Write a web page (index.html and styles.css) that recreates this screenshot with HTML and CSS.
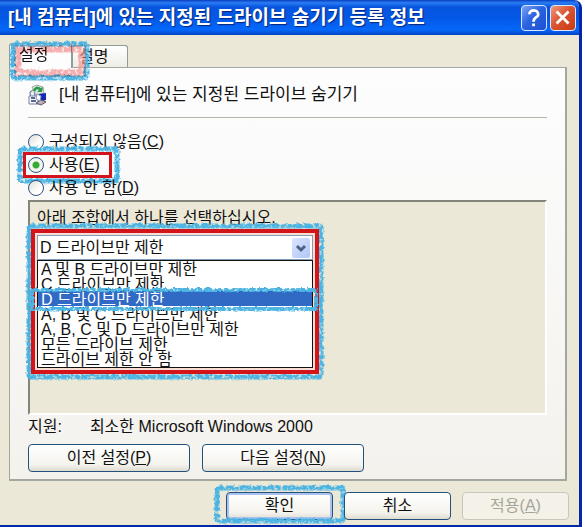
FILE: index.html
```html
<!DOCTYPE html>
<html lang="ko">
<head>
  <meta charset="UTF-8" />
  <title>[내 컴퓨터]에 있는 지정된 드라이브 숨기기 등록 정보</title>
  <link rel="stylesheet" href="styles.css">
</head>
<body>

  <!-- Rough edge shared by the crayon outlines -->
  <svg class="defs" width="0" height="0" aria-hidden="true">
    <filter id="crayon" x="-5%" y="-30%" width="110%" height="160%" color-interpolation-filters="sRGB">
      <feTurbulence type="fractalNoise" baseFrequency="0.3" numOctaves="2" seed="4" result="noise" />
      <feDisplacementMap in="SourceGraphic" in2="noise" scale="4" xChannelSelector="R" yChannelSelector="G" result="rough" />
      <feColorMatrix in="noise" type="matrix" values="0 0 0 0 0  0 0 0 0 0  0 0 0 0 0  0 3 0 0 -0.5" result="holes" />
      <feComposite in="rough" in2="holes" operator="in" />
    </filter>
  </svg>

  <main class="window">
    <header class="title-bar">
      <h1>[내 컴퓨터]에 있는 지정된 드라이브 숨기기 등록 정보</h1>
      <button type="button" class="title-btn" aria-label="도움말">
        <svg viewBox="0 0 26 26"><path d="M8 9C8 3 18 3.500 17.500 9.500C17.300 12.500 12.500 12 12.500 17M12.500 19V22" /></svg>
      </button>
      <button type="button" class="title-btn close" aria-label="닫기">
        <svg viewBox="0 0 26 26"><path d="M6 6L19 19M19 6L6 19" /></svg>
      </button>
    </header>

    <form class="content">
      <div class="tabs" role="tablist">
        <button type="button" class="tab active" role="tab" aria-selected="true">설정
          <svg class="mark tab-mark" aria-hidden="true">
            <rect class="blue" width="100%" height="100%" rx="2" />
          </svg>
          <svg class="mark tab-shade" aria-hidden="true">
            <rect class="pink" width="100%" height="100%" />
          </svg>
        </button>
        <button type="button" class="tab" role="tab" aria-selected="false">설명</button>
      </div>

      <section class="panel">
        <div class="policy">
          <svg class="policy-icon" viewBox="0 0 20 22" aria-hidden="true">
            <path d="M2 8L6 5L8 19L3 19Z" fill="#e8edf5" stroke="#55658c" />
            <path d="M4 3L9 1L15 3L16 9L8 11Z" fill="#dce8de" stroke="#a0aaa8" />
            <path d="M5 6Q8 0 13 4L15 3L14 8L9 8L11 6Q8 4 7 8Z" fill="#2b9b4b" />
            <path d="M1 12H10V20H1Z" fill="#f7f8ff" stroke="#7580a5" />
            <path d="M3 14H7M3 17H8" stroke="#26365f" stroke-width="1.500" />
            <path d="M11 10L18 9L18 16L12 18Z" fill="#1526b5" />
            <path d="M8 19L13 16L18 18L13 21Z" fill="#bcb0b2" stroke="#5b5870" />
            <path d="M9 10L13 12L12 17L8 15Z" fill="#fff" stroke="#8794ad" />
          </svg>
          <h2>[내 컴퓨터]에 있는 지정된 드라이브 숨기기</h2>
        </div>

        <div class="states">
          <label><input type="radio" name="state"><span>구성되지 않음(<u>C</u>)</span></label>
          <label class="marked"><input type="radio" name="state" checked><span>사용(<u>E</u>)</span>
            <svg class="mark state-mark" aria-hidden="true"><rect class="blue" width="100%" height="100%" rx="2" /></svg>
            <span class="red-box"></span>
          </label>
          <label><input type="radio" name="state"><span>사용 안 함(<u>D</u>)</span></label>
        </div>

        <div class="options">
          <label for="drives">아래 조합에서 하나를 선택하십시오.</label>
          <div class="combo">
            <div class="combo-field">
              <select id="drives">
                <option>D 드라이브만 제한</option>
              </select>
              <svg class="arrow" viewBox="0 0 18 20" aria-hidden="true"><path d="M5 8L9 12L13 8" /></svg>
            </div>
            <select class="drive-list" size="7" aria-label="드라이브 조합">
              <option>A 및 B 드라이브만 제한</option>
              <option>C 드라이브만 제한</option>
              <option selected>D 드라이브만 제한</option>
              <option>A, B 및 C 드라이브만 제한</option>
              <option>A, B, C 및 D 드라이브만 제한</option>
              <option>모든 드라이브 제한</option>
              <option>드라이브 제한 안 함</option>
            </select>
            <svg class="mark combo-mark" aria-hidden="true"><rect class="blue" width="100%" height="100%" rx="2" /></svg>
            <span class="red-box"></span>
            <svg class="mark row-mark" aria-hidden="true"><rect class="blue" width="100%" height="100%" /></svg>
          </div>
        </div>

        <p class="support"><span>지원:</span><span>최소한 Microsoft Windows 2000</span></p>

        <div class="nav-buttons">
          <button type="button" class="btn">이전 설정(<u>P</u>)</button>
          <button type="button" class="btn">다음 설정(<u>N</u>)</button>
        </div>
      </section>

      <footer class="actions">
        <button type="button" class="btn default">확인
          <svg class="mark ok-mark" aria-hidden="true"><rect class="blue" width="100%" height="100%" rx="2" /></svg>
        </button>
        <button type="button" class="btn">취소</button>
        <button type="button" class="btn" disabled>적용(<u>A</u>)</button>
      </footer>
    </form>
  </main>

</body>
</html>
```
FILE: styles.css
```css
* {
  box-sizing: border-box;
}

body {
  margin: 0;
  padding-right: 3px;
  background-color: #fff;
  color: #111;
  font-family: "Liberation Sans", "Noto Sans CJK KR", sans-serif;
  font-size: 16px;
  line-height: 22px;
}

h1, h2, p {
  margin: 0;
}

button, select {
  font: inherit;
  color: inherit;
}

.defs {
  position: absolute;
}

.window {
  background-color: #ebe8d8;
  border-right: 3px solid #0427a8;
  border-bottom: 3px solid #0427a8;
  border-radius: 0 8px 0 0;
  overflow: hidden;
}

/* Title bar */
.title-bar {
  display: flex;
  align-items: center;
  gap: 3px;
  height: 35px;
  padding-left: 8px;
  background: linear-gradient(#0a3fc0, #2a7cf4 8%, #0755df 20%, #0457e5 50%, #0568fb 85%, #0343c0);
}

.title-bar h1 {
  flex: 1;
  color: #fff;
  font-size: 19px;
  line-height: 24px;
  white-space: nowrap;
  text-shadow: 1px 1px 1px #06277c;
}

.title-btn {
  width: 26px;
  height: 26px;
  padding: 0;
  border: 1px solid #d9e7ff;
  border-radius: 4px;
  background: linear-gradient(135deg, #7da5f5, #2c63df 45%, #1c50cf);
}

.title-btn.close {
  margin-right: 3px;
  background: linear-gradient(135deg, #ef9b82, #dc5430 45%, #c53b15);
}

.title-btn svg {
  display: block;
  fill: none;
  stroke: #fff;
  stroke-width: 3;
}

/* Tabs */
.content {
  padding: 8px 10px 5px 9px;
}

.tabs {
  display: flex;
  align-items: flex-end;
}

.tab {
  position: relative;
  width: 56px;
  height: 22px;
  padding: 0 6px;
  border: 1px solid #919b9c;
  border-bottom: 0;
  border-radius: 3px 3px 0 0;
  background: linear-gradient(#fff, #eeede5);
  text-align: left;
  line-height: 22px;
}

.tab.active {
  z-index: 1;
  width: 63px;
  height: 25px;
  margin-bottom: -1px;
  padding: 0 9px 3px;
  background: #fdfdfd;
}

.panel {
  margin-right: 2px;
  padding: 14px 18px 7px;
  border: 1px solid #a3a89f;
  border-right-width: 2px;
  border-bottom-width: 2px;
  background: linear-gradient(#fdfdfe, #f3f2ed);
}

.policy {
  display: flex;
  align-items: center;
  gap: 11px;
  height: 36px;
  padding-bottom: 10px;
  border-bottom: 1px solid #b5b4a6;
}

.policy-icon {
  width: 20px;
  height: 22px;
}

.policy h2 {
  font-size: 17px;
  font-weight: normal;
}

/* Radio buttons */
.states {
  display: flex;
  flex-direction: column;
  align-items: flex-start;
  gap: 1px;
  padding: 13px 0 1px;
}

.states label {
  display: flex;
  align-items: center;
  gap: 5px;
  position: relative;
}

.states input {
  appearance: none;
  width: 16px;
  height: 16px;
  margin: 0;
  border: 1px solid #31557f;
  border-radius: 50%;
  background: linear-gradient(135deg, #dcdcd6, #fff 65%);
}

.states input:checked {
  background: radial-gradient(circle, #35ac31 0 3px, #f3f3ef 4px);
}

/* Option area */
.options {
  height: 215px;
  padding: 5px 7px;
  border: 2px solid #fff;
  border-top-color: #85847a;
  border-left-color: #85847a;
  background-color: #ebe8d8;
}

.options > label {
  display: block;
}

.combo {
  position: relative;
  width: 276px;
  margin-top: 6px;
}

.combo-field {
  position: relative;
}

.combo-field select {
  display: block;
  appearance: none;
  width: 100%;
  height: 25px;
  padding: 0 22px 0 2px;
  border: 1px solid #7f9db9;
  border-radius: 0;
  background-color: #fff;
}

.arrow {
  position: absolute;
  top: 3px;
  right: 3px;
  width: 18px;
  height: 20px;
  border-radius: 2px;
  background: linear-gradient(135deg, #dae5ff, #b0c6f6);
  fill: none;
  stroke: #4d6185;
  stroke-width: 3;
  pointer-events: none;
}

.drive-list {
  display: block;
  width: 100%;
  height: 108px;
  padding: 0;
  border: 1px solid #111;
  border-radius: 0;
  background-color: #fff;
  overflow: hidden;
}

.drive-list option {
  display: flex;
  align-items: center;
  height: 15px;
  min-height: 0;
  padding: 0 3px 2px;
  overflow: visible;
}

.drive-list option:checked {
  background: linear-gradient(#316ac5, #316ac5);
  color: #fff;
  -webkit-text-fill-color: #fff;
}

/* Outlines drawn over the controls */
.mark {
  position: absolute;
  overflow: visible;
  pointer-events: none;
}

.mark rect {
  fill: none;
  stroke-width: 5px;
  filter: url(#crayon);
}

.mark .blue {
  stroke: #4bb4e2;
}

.mark .pink {
  stroke: #f59a9a;
  stroke-width: 7px;
  opacity: 0.8;
}

.tab-mark {
  top: 0;
  left: 3px;
  width: 74px;
  height: 34px;
}

.tab-shade {
  top: 5px;
  left: 8px;
  width: 64px;
  height: 24px;
  mix-blend-mode: multiply;
}

.state-mark {
  top: -5px;
  left: -8px;
  width: 97px;
  height: 32px;
}

.combo-mark {
  top: -9px;
  left: -8px;
  width: 292px;
  height: 151px;
}

.row-mark {
  top: 55px;
  left: -5px;
  width: 284px;
  height: 19px;
}

.row-mark rect {
  stroke-width: 4px;
}

.ok-mark {
  top: -5px;
  left: -10px;
  width: 126px;
  height: 33px;
}

.red-box {
  position: absolute;
  inset: -6px;
  border: 4px solid #d3141a;
  box-shadow: inset 0 0 0 2px #f8ddd2;
  pointer-events: none;
}

.marked .red-box {
  inset: -2px -12px -2px -5px;
  border-width: 3px;
  box-shadow: none;
}

/* Bottom part of the page */
.support {
  display: flex;
  gap: 28px;
  padding-top: 1px;
}

.nav-buttons {
  display: flex;
  gap: 12px;
  margin-top: 6px;
}

.btn {
  position: relative;
  width: 107px;
  height: 28px;
  padding: 0;
  border: 1px solid #24517c;
  border-radius: 4px;
  background: linear-gradient(#fff, #f4f3ed 75%, #dedbd0);
  line-height: 24px;
}

.nav-buttons .btn {
  width: 162px;
}

.btn.default {
  box-shadow: inset 0 0 0 2px #a9c2f0;
}

.btn:disabled {
  border-color: #c9c7ba;
  background: #f3f1e8;
  color: #a6a598;
}

.actions {
  display: flex;
  justify-content: flex-end;
  gap: 11px;
  margin-top: 11px;
}
```
